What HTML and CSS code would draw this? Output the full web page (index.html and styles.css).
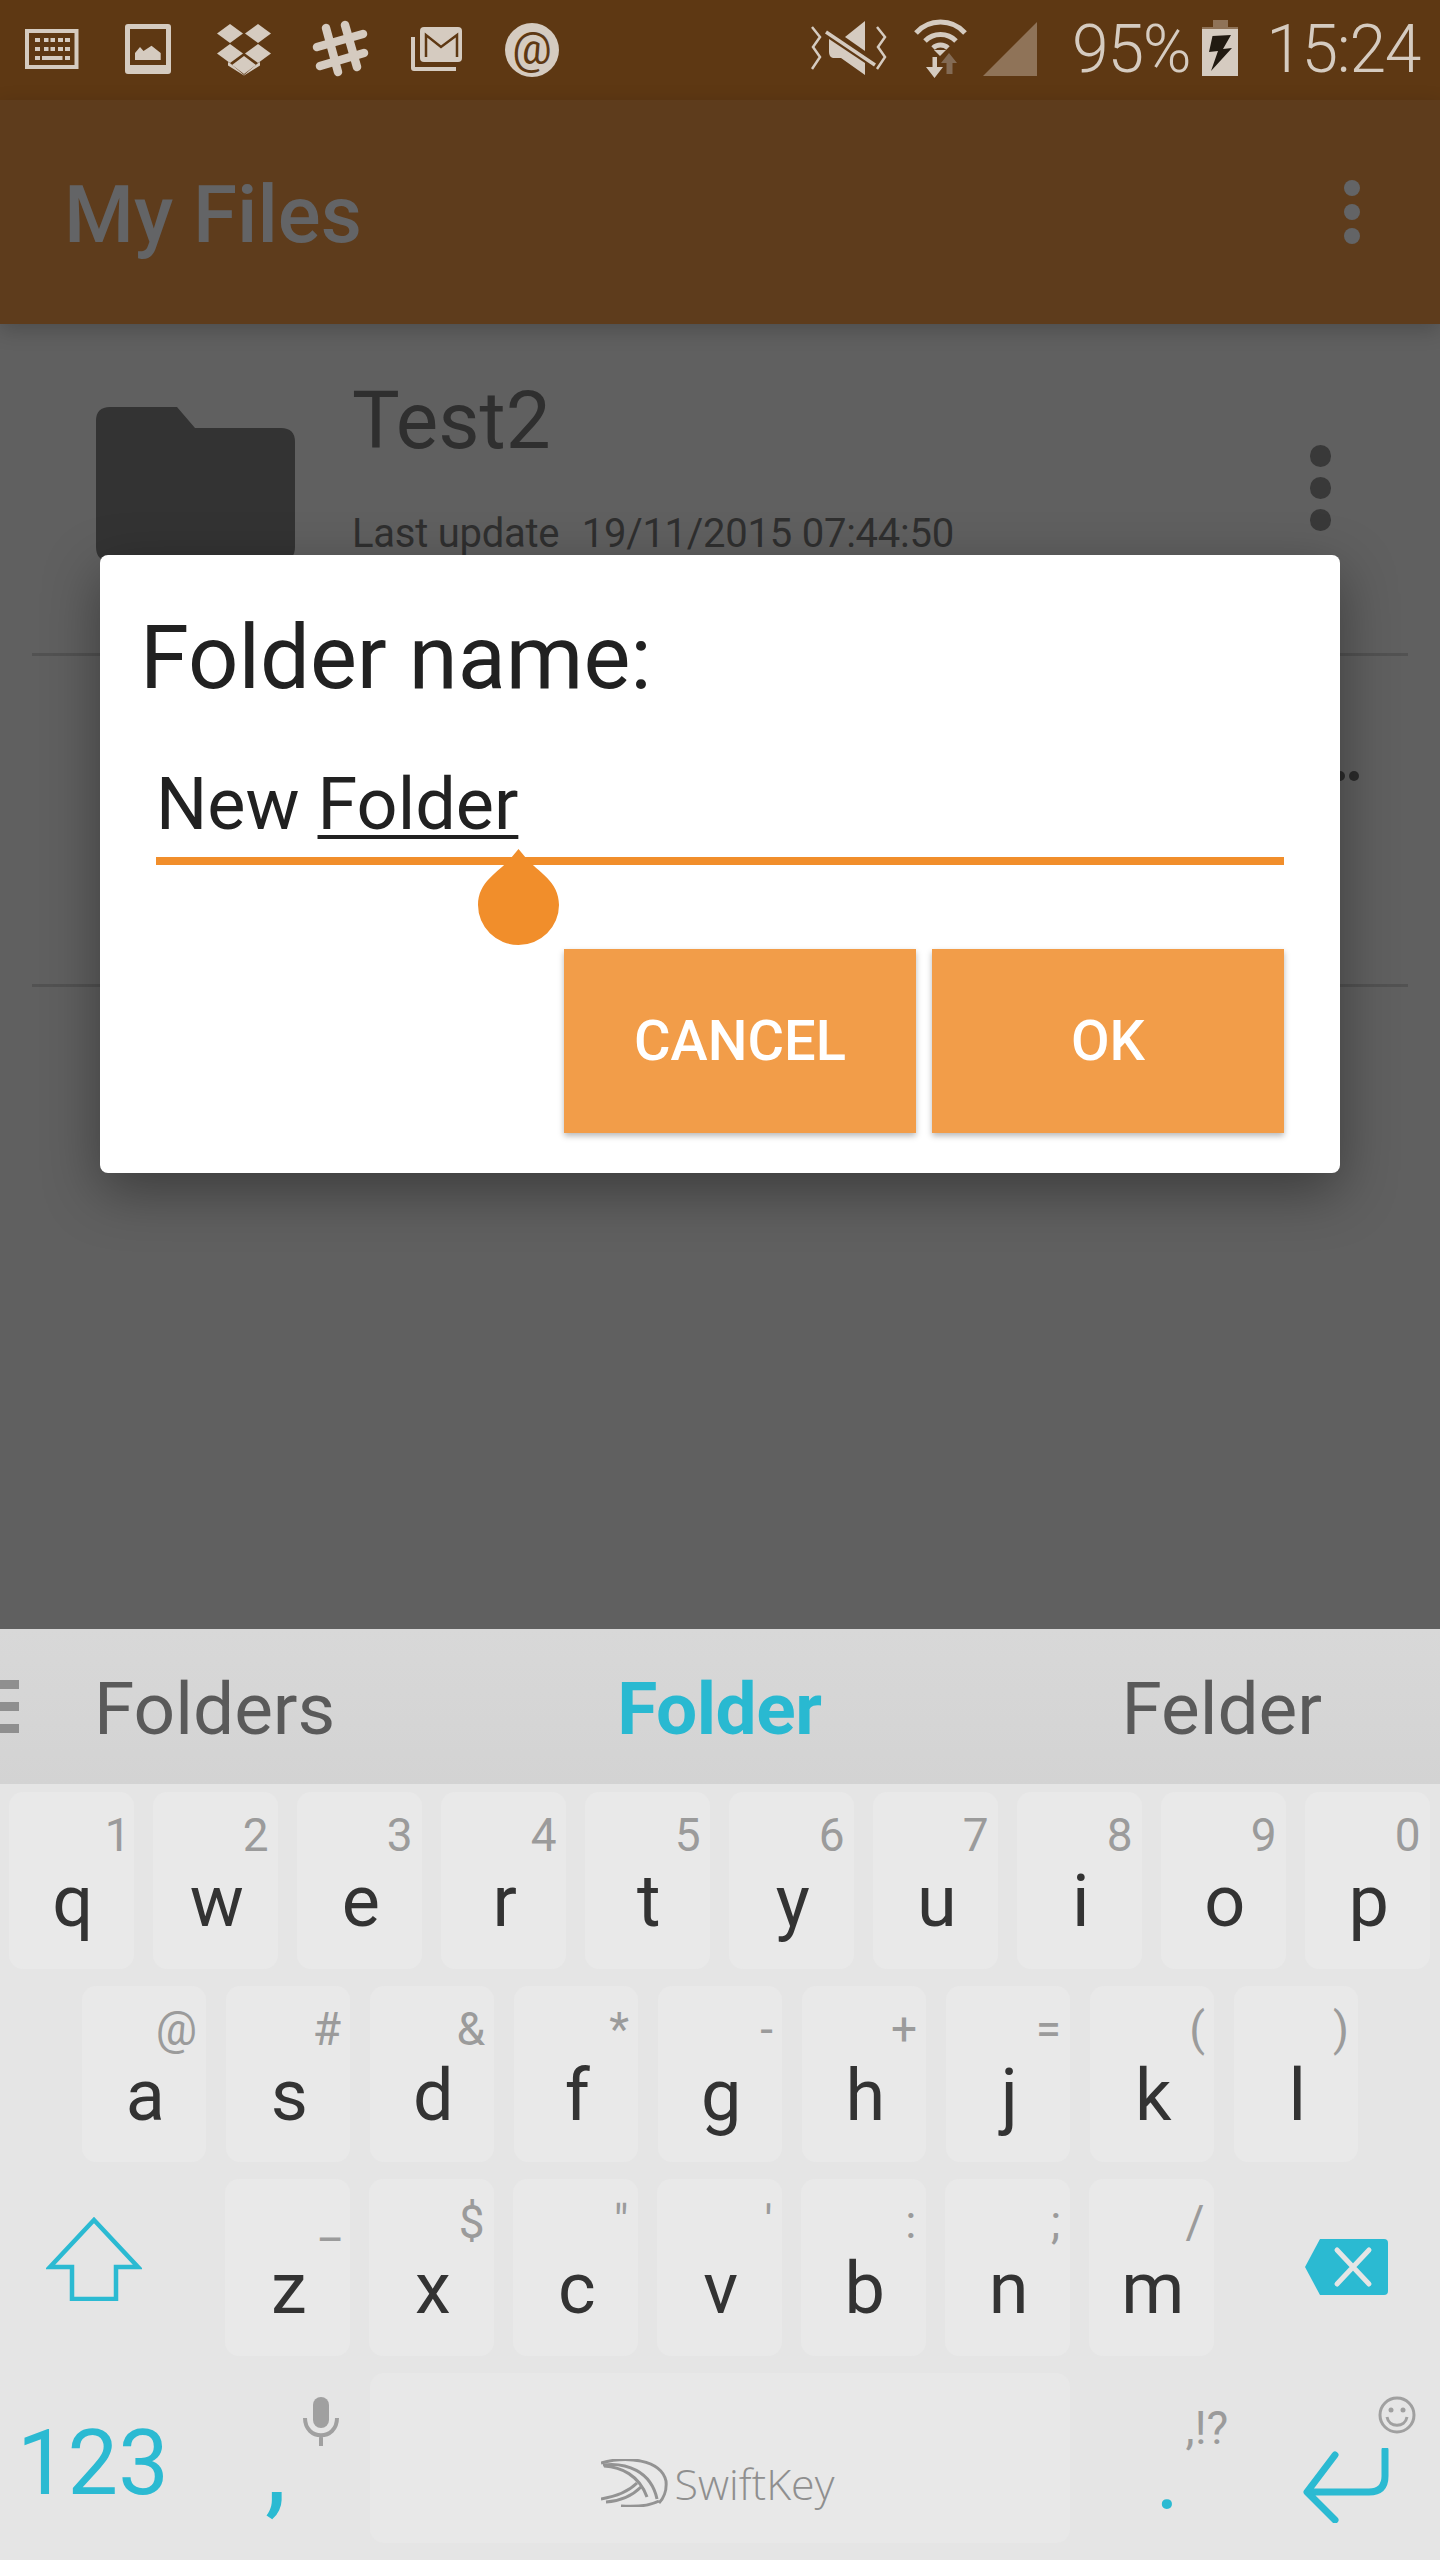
FILE: index.html
```html
<!DOCTYPE html>
<html lang="en">
<head>
<meta charset="utf-8">
<title>My Files</title>
<link rel="stylesheet" href="styles.css">
</head>
<body>
<div class="phone">
  <header class="status">
    <div class="status-left">
      <svg class="slot" viewBox="0 0 60 60"><path class="ico" fill-rule="evenodd" d="M3 9H56.5V49H3ZM7 13V45H52.5V13Z"/><g class="ico"><rect x="13" y="18" width="5" height="4"/><rect x="22" y="18" width="4.500" height="4"/><rect x="28.500" y="18" width="4.500" height="4"/><rect x="36" y="18" width="5" height="4"/><rect x="43" y="18" width="5" height="4"/><rect x="13" y="27" width="5" height="4"/><rect x="22" y="27" width="4.500" height="4"/><rect x="28.500" y="27" width="4.500" height="4"/><rect x="36" y="27" width="5" height="4"/><rect x="43" y="27" width="5" height="4"/><rect x="13" y="36" width="5" height="4"/><rect x="20" y="36" width="20.500" height="4"/><rect x="43" y="36" width="5" height="4"/></g></svg>
      <svg class="slot" viewBox="0 0 60 60"><path class="ico" fill-rule="evenodd" d="M10 4H50Q53 4 53 7V51Q53 54 50 54H10Q7 54 7 51V7Q7 4 10 4ZM12 9V45H48V9Z"/><path class="ico" d="M17 40V33L22 27L25.500 31L33.500 25.700L42.700 33V40Z"/></svg>
      <svg class="slot" viewBox="0 0 60 60"><g class="ico"><path d="M16 4L29 13.500L16 23L3 13.500Z"/><path d="M44 4L57 13.500L44 23L31 13.500Z"/><path d="M16 24L29 33.500L16 43L3 33.500Z"/><path d="M44 24L57 33.500L44 43L31 33.500Z"/><path d="M30 36L42 45L30 54L18 45Z"/><path d="M14 42L16.500 43.500L30 55L43.500 43.500L46 42V45.500L30 55.500L14 45.500Z"/></g></svg>
      <svg class="slot" viewBox="0 0 60 60"><g class="hash"><path d="M16 8L28 52"/><path d="M35 5L47 47"/><path d="M7 27L53 14"/><path d="M10 46L54 33"/></g></svg>
      <svg class="slot" viewBox="0 0 60 60"><path class="ico" d="M5 17H9V47H50V51H8Q5 51 5 48Z"/><rect class="ico" x="14" y="7" width="42" height="35" rx="4"/><path class="gm" d="M20 37V15L35 27L51 15V37"/></svg>
      <div class="slot at-wrap"><span class="at">@</span></div>
    </div>
    <div class="status-right">
      <svg class="mute" viewBox="0 0 76 60"><g class="ico"><path d="M54 2V32L34 18Z"/><path d="M18 20L54 44V56L30 39H22Q18 38 18 33Z"/></g><path class="slash" d="M15 13L64 46"/><g class="zig"><polyline points="1,8 9,18 2,28 9,38 1,50"/><polyline points="66,8 74,18 67,28 74,38 66,50"/></g></svg>
      <svg class="wifi" viewBox="0 0 55 60"><g class="arc"><path d="M3 14A33 33 0 0 1 52 14"/><path d="M12 22A22 22 0 0 1 43 22"/><path d="M20 29A11 11 0 0 1 35 29"/></g><path class="ico" d="M21 31H33L27 37Z"/><path class="dim" d="M36 34L44 44H39.500V55H33.500V44H28Z"/><path class="ico" d="M19.500 38H24V48H30L21.500 59L13 48H19.500Z"/></svg>
      <svg class="signal" viewBox="0 0 54 54"><path class="tri" d="M0 54L54 0V54Z"/></svg>
      <span class="pct">95%</span>
      <svg class="batt" viewBox="0 0 36 56"><rect class="tri" x="11" y="0" width="15" height="8"/><rect class="ico" x="0" y="7" width="36" height="49"/><rect class="tri" x="0" y="7" width="36" height="2"/><path class="bolt" d="M29 15L10.500 16L7 32L16 31L9 51L30 28L21 29Z"/></svg>
      <span class="time">15:24</span>
    </div>
  </header>

  <div class="appbar">
    <h1 class="app-title">My Files</h1>
    <div class="menu"><i></i><i></i><i></i></div>
  </div>

  <main class="list">
    <div class="row">
      <svg class="folder" viewBox="0 0 199 154"><path d="M14 0H81L99 21H185Q199 21 199 35V140Q199 154 185 154H14Q0 154 0 140V14Q0 0 14 0Z"/></svg>
      <div class="row-text">
        <div class="row-name">Test2</div>
        <div class="row-meta"><span class="meta-label">Last update</span>&nbsp; 19/11/2015 07:44:50</div>
      </div>
      <div class="row-menu"><i></i><i></i><i></i></div>
    </div>
    <div class="row row-second">
      <div class="trail"><i></i><i></i></div>
    </div>
  </main>

  <section class="dialog">
    <h2 class="dlg-title">Folder name:</h2>
    <div class="field">
      <span class="field-text">New <u>Folder</u></span>
      <svg class="handle" viewBox="0 0 81 96"><path d="M40.500 0L48 9C60 23 81 32 81 56A40.500 40 0 0 1 0 56C0 32 21 23 33 9Z"/></svg>
    </div>
    <div class="actions">
      <button class="btn">CANCEL</button>
      <button class="btn">OK</button>
    </div>
  </section>

  <section class="keyboard">
    <div class="suggest">
      <div class="bars"><i></i><i></i><i></i></div>
      <span class="sg sg-a">Folders</span>
      <span class="sg sg-b">Folder</span>
      <span class="sg sg-c">Felder</span>
    </div>
    <div class="keys">
      <div class="krow k1">
        <div class="key"><span class="hint hint-one">1</span><span class="ltr">q</span></div>
        <div class="key"><span class="hint">2</span><span class="ltr">w</span></div>
        <div class="key"><span class="hint">3</span><span class="ltr">e</span></div>
        <div class="key"><span class="hint">4</span><span class="ltr">r</span></div>
        <div class="key"><span class="hint">5</span><span class="ltr">t</span></div>
        <div class="key"><span class="hint">6</span><span class="ltr">y</span></div>
        <div class="key"><span class="hint">7</span><span class="ltr">u</span></div>
        <div class="key"><span class="hint">8</span><span class="ltr">i</span></div>
        <div class="key"><span class="hint">9</span><span class="ltr">o</span></div>
        <div class="key"><span class="hint">0</span><span class="ltr">p</span></div>
      </div>
      <div class="krow k2">
        <div class="key"><span class="hint">@</span><span class="ltr">a</span></div>
        <div class="key"><span class="hint">#</span><span class="ltr">s</span></div>
        <div class="key"><span class="hint">&amp;</span><span class="ltr">d</span></div>
        <div class="key"><span class="hint">*</span><span class="ltr">f</span></div>
        <div class="key"><span class="hint">-</span><span class="ltr">g</span></div>
        <div class="key"><span class="hint">+</span><span class="ltr">h</span></div>
        <div class="key"><span class="hint">=</span><span class="ltr">j</span></div>
        <div class="key"><span class="hint">(</span><span class="ltr">k</span></div>
        <div class="key"><span class="hint">)</span><span class="ltr">l</span></div>
      </div>
      <div class="krow k3">
        <div class="shift"><svg viewBox="0 0 96 84"><path d="M48 3L92 50H70V82H26V50H4Z"/></svg></div>
        <div class="key"><span class="hint">_</span><span class="ltr">z</span></div>
        <div class="key"><span class="hint">$</span><span class="ltr">x</span></div>
        <div class="key"><span class="hint">"</span><span class="ltr">c</span></div>
        <div class="key"><span class="hint">'</span><span class="ltr">v</span></div>
        <div class="key"><span class="hint">:</span><span class="ltr">b</span></div>
        <div class="key"><span class="hint">;</span><span class="ltr">n</span></div>
        <div class="key"><span class="hint">/</span><span class="ltr">m</span></div>
        <svg class="bksp" viewBox="0 0 84 58"><path class="bk-fill" d="M16 1H80Q84 1 84 5V53Q84 57 80 57H16L1 29Z"/><path class="bk-x" d="M33 12L65 46M65 12L33 46"/></svg>
      </div>
      <div class="krow k4">
        <span class="num">123</span>
        <span class="comma">,</span>
        <svg class="mic" viewBox="0 0 36 50"><rect class="gray" x="10" y="0" width="16" height="31" rx="8"/><path class="mic-line" d="M2 21C2 44 34 44 34 21M18 37V49"/></svg>
        <div class="space">
          <svg class="sk-logo" viewBox="0 0 67 48"><g class="sk"><path d="M0 4C25 -3 60 0 65 22C66 32 62 40 58 44"/><path d="M2 6C25 3 50 12 56 40"/><path d="M3 7C20 8 38 16 46 38"/><path d="M0 40C12 38 26 34 36 24"/><path d="M5 43C20 42 32 36 40 28"/><path d="M20 47C35 48 50 46 58 42"/></g></svg>
          <span class="sk-text">SwiftKey</span>
        </div>
        <span class="dot">.</span>
        <span class="punct">,!?</span>
        <div class="enter-col">
          <svg class="smile" viewBox="0 0 38 38"><circle class="sm" cx="19" cy="19" r="17"/><circle class="gray" cx="13" cy="14" r="2.500"/><circle class="gray" cx="25" cy="14" r="2.500"/><path class="sm" d="M9 21C11 32 27 32 29 21"/></svg>
          <svg class="enter" viewBox="0 0 86 75"><path d="M82 2V28Q82 44 66 44H5M32 7L4 44L32 72"/></svg>
        </div>
      </div>
    </div>
  </section>
</div>
</body>
</html>
```
FILE: styles.css
```css
* { box-sizing: border-box; }
html, body { margin: 0; padding: 0; }
body { background: #606060; font-family: Roboto, "Liberation Sans", sans-serif; }
.phone { position: relative; width: 1440px; height: 2560px; overflow: hidden; display: flex; flex-direction: column; background: #606060; }

/* status bar */
.status { height: 100px; flex: none; background: #5e3813; display: flex; justify-content: space-between; align-items: center; padding: 0 20px 0 22px; }
.status-left { display: flex; gap: 36px; }
.slot { width: 60px; height: 60px; display: block; }
.ico { fill: #d5cbc0; }
.hash { fill: none; stroke: #d5cbc0; stroke-width: 8.500; stroke-linecap: round; }
.gm { fill: none; stroke: #5e3813; stroke-width: 2.500; }
.at-wrap { display: flex; align-items: center; justify-content: center; }
.at { width: 54px; height: 54px; border-radius: 50%; background: #d5cbc0; color: #5e3813; font-size: 44px; line-height: 52px; text-align: center; }
.status-right { display: flex; align-items: center; height: 100px; }
.mute { width: 76px; height: 60px; margin-top: -2px; }
.wifi { width: 55px; height: 60px; margin-left: 26px; margin-top: -2px; }
.signal { width: 54px; height: 54px; margin-left: 15px; margin-top: -2px; }
.tri { fill: #8f7358; }
.dim { fill: #836b55; }
.arc { fill: none; stroke: #d5cbc0; stroke-width: 5; }
.slash { stroke: #d5cbc0; stroke-width: 3.500; fill: none; }
.zig { fill: none; stroke: #d5cbc0; stroke-width: 2.500; }
.pct, .time { font-weight: 300; font-size: 66px; line-height: 100px; color: #d5cbc0; letter-spacing: -1.300px; }
.pct { margin-left: 35px; }
.batt { width: 36px; height: 56px; margin-left: 12px; margin-top: -4px; }
.bolt { fill: #211a11; }
.time { margin-left: 28px; }

/* app bar */
.appbar { height: 224px; flex: none; background: #5e3c1c; display: flex; align-items: center; justify-content: space-between; padding: 0 80px 0 64px; box-shadow: 0 6px 20px rgba(0,0,0,.2); position: relative; z-index: 1; }
.app-title { margin: 6px 0 0; font-size: 80px; font-weight: 500; color: #636466; line-height: 100px; }
.menu { display: flex; flex-direction: column; gap: 8px; }
.menu i { width: 16px; height: 16px; border-radius: 50%; background: #636466; display: block; }

/* list */
.list { flex: none; display: flex; flex-direction: column; }
.row { height: 332px; margin: 0 32px; border-bottom: 3px solid #525252; display: flex; position: relative; }
.folder { width: 199px; height: 154px; flex: none; margin: 83px 0 0 64px; }
.folder path { fill: #333; }
.row-text { margin-left: 57px; padding-top: 52px; color: #2f2f2f; flex: 1; }
.row-name { font-size: 80px; line-height: 90px; font-weight: 400; }
.row-meta { font-size: 40px; line-height: 50px; margin-top: 43px; letter-spacing: -0.250px; }
.meta-label { margin-right: 3px; }
.row-menu { display: flex; flex-direction: column; gap: 10.500px; margin: 121px 77px 0 0; }
.row-menu i { width: 21.500px; height: 21.500px; border-radius: 50%; background: #393939; display: block; }
.row-second { height: 331px; justify-content: flex-end; }
.trail { display: flex; gap: 4px; margin: 115px 49px 0 0; }
.trail i { width: 10px; height: 10px; border-radius: 50%; background: #2c2c2c; display: block; }

/* dialog */
.dialog { position: absolute; left: 100px; top: 555px; width: 1240px; height: 618px; background: #fff; border-radius: 8px; box-shadow: 0 18px 55px rgba(0,0,0,.38); display: flex; flex-direction: column; padding: 0 56px 40px 40px; z-index: 2; }
.dlg-title { margin: 53px 0 0 0; font-size: 88.500px; line-height: 100px; font-weight: 400; color: #212121; }
.field { position: relative; margin: 55px 0 0 16px; height: 102px; border-bottom: 8px solid #f18e2b; }
.field-text { display: block; font-size: 72px; line-height: 84px; color: #212121; padding-left: 0; }
.field-text u { text-decoration-thickness: 4px; text-underline-offset: 6px; }
.handle { position: absolute; left: 322px; top: 86px; width: 81px; height: 96px; }
.handle path { fill: #f18e2b; }
.actions { margin-top: auto; display: flex; justify-content: flex-end; gap: 16px; }
.btn { width: 352px; height: 184px; border: 0; border-radius: 0; background: #f29d49; color: #fff; font-family: inherit; font-size: 56px; font-weight: 500; box-shadow: 0 3px 6px rgba(0,0,0,.28); padding: 0; }

/* keyboard */
.keyboard { position: absolute; left: 0; right: 0; top: 1629px; bottom: 0; background: #e5e5e5; display: flex; flex-direction: column; }
.suggest { height: 155px; flex: none; background: linear-gradient(#d8d8d8, #d3d3d3); display: flex; align-items: center; position: relative; font-size: 73px; }
.bars { display: flex; flex-direction: column; gap: 13px; width: 19px; }
.bars i { height: 9px; background: #8f8f8f; display: block; }
.sg { color: #5a5a5a; line-height: 155px; margin-top: 6px; }
.sg-a { margin-left: 75px; }
.sg-b { margin-left: 282px; color: #29b9d1; font-weight: 700; letter-spacing: -0.500px; }
.sg-c { margin-left: 300px; }
.keys { padding: 8px 10px 0 9px; display: flex; flex-direction: column; gap: 17px; }
.krow { display: flex; gap: 19.500px; }
.k1 { height: 177px; }
.k2 { height: 176px; padding-left: 72.500px; }
.k3 { height: 177px; }
.k4 { height: 170px; gap: 0; }
.key { width: 124.500px; flex: none; background: #e9e9e9; border-radius: 14px; display: flex; flex-direction: column; }
.hint { display: block; text-align: right; font-size: 46px; line-height: 54px; padding: 0 9px 0 0; margin-top: 16px; color: #9b9b9b; height: 54px; }
.hint-one { padding-right: 3px; }
.ltr { display: block; text-align: center; font-size: 72px; line-height: 80px; color: #333; padding-left: 3px; }
.shift { width: 196.500px; flex: none; padding: 38px 0 0 37px; }
.shift svg { width: 96px; height: 84px; display: block; }
.shift path { fill: none; stroke: #2bbad2; stroke-width: 4.500; }
.bksp { width: 84px; height: 58px; flex: none; margin: 59px 0 0 71px; }
.bk-fill { fill: #2bbad2; }
.bk-x { stroke: #e5e5e5; stroke-width: 5; stroke-linecap: round; fill: none; }
.num { font-size: 90px; line-height: 100px; color: #2bbad2; width: 256px; margin-top: 41px; padding-left: 8px; font-weight: 400; flex: none; }
.comma { font-size: 110px; line-height: 100px; color: #2bbad2; width: 38px; margin-top: 44px; flex: none; }
.mic { width: 36px; height: 50px; margin-top: 24px; flex: none; margin-right: 30.600px; }
.gray { fill: #a0a0a0; }
.mic-line { fill: none; stroke: #a0a0a0; stroke-width: 4; }
.space { width: 700px; height: 170px; flex: none; background: #e8e8e8; border-radius: 14px; display: flex; align-items: flex-start; padding: 86px 0 0 231px; }
.sk-logo { width: 67px; height: 48px; flex: none; }
.sk { fill: none; stroke: #939393; stroke-width: 3; }
.sk-text { font-family: "Open Sans", sans-serif; font-weight: 300; font-size: 43px; line-height: 50px; color: #8f8f8f; margin-left: 7px; }
.dot { font-size: 90px; line-height: 100px; color: #2bbad2; width: 116px; margin-top: 55px; padding-left: 86px; flex: none; }
.punct { font-size: 46px; line-height: 54px; color: #9b9b9b; width: 117px; margin-top: 28px; flex: none; }
.enter-col { display: flex; flex-direction: column; align-items: flex-end; width: 113px; flex: none; }
.smile { width: 38px; height: 38px; margin-top: 23px; display: block; }
.sm { fill: none; stroke: #a0a0a0; stroke-width: 3; }
.enter { width: 86px; height: 75px; margin: 14px 27px 0 0; display: block; }
.enter path { fill: none; stroke: #2bbad2; stroke-width: 7; stroke-linecap: round; stroke-linejoin: round; }
```
